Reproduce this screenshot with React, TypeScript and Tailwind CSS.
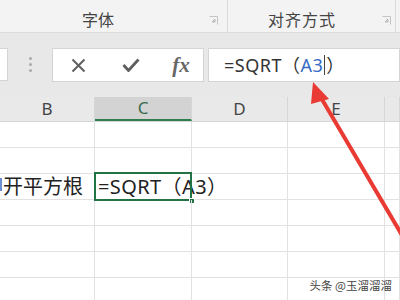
import React from "react";

const font = "font-['Noto_Sans','Noto_Sans_CJK_SC',sans-serif]";

const cols = ["B", "C", "D", "E", ""];
const colW = ["w-[95px]", "w-[97px]", "w-[96px]", "w-[97px]", "flex-1"];

const Launcher = () => (
    <svg width="9" height="9" viewBox="0 0 9 9" className="shrink-0">
        <path d="M0.5 0.5h8v8" fill="none" stroke="#c4c4c4" strokeWidth="1" />
        <path d="M3 6l3-3M6 6V3.5M6 6H3.5" fill="none" stroke="#b0b0b0" strokeWidth="1" />
    </svg>
);

const App = () => {
    const rows = [0, 1, 2, 3, 4, 5, 6];

    return (
        <div className={`relative w-[400px] h-[300px] overflow-hidden bg-white ${font}`}>
            {/* ribbon group labels */}
            <div className="flex h-[33px] bg-[#f3f3f3] border-b border-[#dcdcdc]">
                <div className="flex w-[228px] items-center border-r border-[#dadada] pr-[9px] pt-[8px]">
                    <span className="ml-[82px] text-[16px] text-[#444]">字体</span>
                    <div className="flex-1" />
                    <Launcher />
                </div>
                <div className="flex w-[168px] items-center border-r border-[#dadada] pr-[4px] pt-[8px]">
                    <span className="ml-[40px] text-[16px] tracking-[1px] text-[#444]">对齐方式</span>
                    <div className="flex-1" />
                    <Launcher />
                </div>
            </div>

            {/* formula bar */}
            <div className="flex h-[64px] items-start bg-[#e8e8e8] pt-[15px]">
                <div className="h-[33px] w-[8px] bg-white border-y border-r border-[#d4d4d4]" />
                <div className="flex h-[33px] w-[44px] flex-col items-center justify-center gap-[3px]">
                    <div className="h-[3px] w-[3px] rounded-full bg-[#aaa]" />
                    <div className="h-[3px] w-[3px] rounded-full bg-[#aaa]" />
                    <div className="h-[3px] w-[3px] rounded-full bg-[#aaa]" />
                </div>
                <div className="flex h-[34px] w-[152px] items-center bg-white border border-[#d4d4d4]">
                    <div className="flex w-[50px] justify-center">
                        <svg width="15" height="15" viewBox="0 0 15 15">
                            <path d="M1.5 1.5l12 12M13.5 1.5l-12 12" stroke="#5f5f5f" strokeWidth="2" />
                        </svg>
                    </div>
                    <div className="flex w-[56px] justify-center">
                        <svg width="18" height="14" viewBox="0 0 18 14">
                            <path d="M1.5 7l5 5.5L16.5 1.5" fill="none" stroke="#5f5f5f" strokeWidth="2.8" />
                        </svg>
                    </div>
                    <div className="flex w-[44px] justify-center">
                        <span className="font-['Liberation_Serif',serif] text-[21px] font-bold italic leading-none text-[#666]">
                            fx
                        </span>
                    </div>
                </div>
                <div className="ml-[4px] flex h-[34px] flex-1 items-center bg-white border border-[#d4d4d4] pl-[15px] text-[18px] tracking-[0.5px] text-[#333]">
                    <span>=SQRT（</span>
                    <span className="text-[#3569c3]">A3</span>
                    <span className="mx-[1px] h-[20px] w-px bg-[#444]" />
                    <span>）</span>
                </div>
            </div>

            {/* column headers */}
            <div className="flex h-[25px] bg-[#e9e9e9] border-b border-[#d6d6d6] text-[17px] text-[#444]">
                {cols.map((c, i) => (
                    <div
                        key={i}
                        className={`${colW[i]} flex items-center justify-center border-r border-[#d6d6d6] ${
                            c === "C" ? "bg-[#d3d3d3] border-b-2 border-b-[#2f7d4f] text-[#3d6b50]" : ""
                        }`}
                    >
                        {c}
                    </div>
                ))}
            </div>

            {/* grid rows */}
            {rows.map((r) => (
                <div key={r} className="flex h-[26px] border-b border-[#e2e2e2] text-[20px] text-[#222]">
                    {cols.map((c, i) => (
                        <div
                            key={i}
                            className={`${colW[i]} shrink-0 flex items-center border-r border-[#e2e2e2] ${
                                i === 1 ? "relative z-10" : ""
                            } ${i === 0 ? "relative" : ""}`}
                        >
                            {r === 2 && i === 0 && (
                                <>
                                    <div className="absolute left-0 top-[4px] h-[13px] w-[2px] bg-[#6a8fd4]" />
                                    <span className="pl-[3px] whitespace-nowrap">开平方根</span>
                                </>
                            )}
                            {r === 2 && i === 1 && (
                                <>
                                    <span className="pl-[3px] whitespace-nowrap tracking-[0.4px]">=SQRT（A3）</span>
                                    <div className="absolute -left-px -top-[2px] -right-px -bottom-[2px] border-2 border-[#217346]" />
                                    <div className="absolute -right-[4px] -bottom-[5px] h-[6px] w-[6px] bg-[#217346] border border-white" />
                                </>
                            )}
                        </div>
                    ))}
                </div>
            ))}

            {/* red arrow */}
            <svg className="absolute left-0 top-0 pointer-events-none" width="400" height="300" viewBox="0 0 400 300">
                <path d="M320 96L406 242" stroke="#ea3a34" strokeWidth="4" strokeLinecap="round" />
                <path d="M313 82L329 99L311 104Z" fill="#ea3a34" />
            </svg>

            {/* watermark */}
            <div className="absolute right-[8px] bottom-[6px] text-[11.5px] text-[#444] font-['Noto_Sans_CJK_SC',sans-serif]">
                头条 @玉溜溜溜
            </div>
        </div>
    );
};

export default App;
